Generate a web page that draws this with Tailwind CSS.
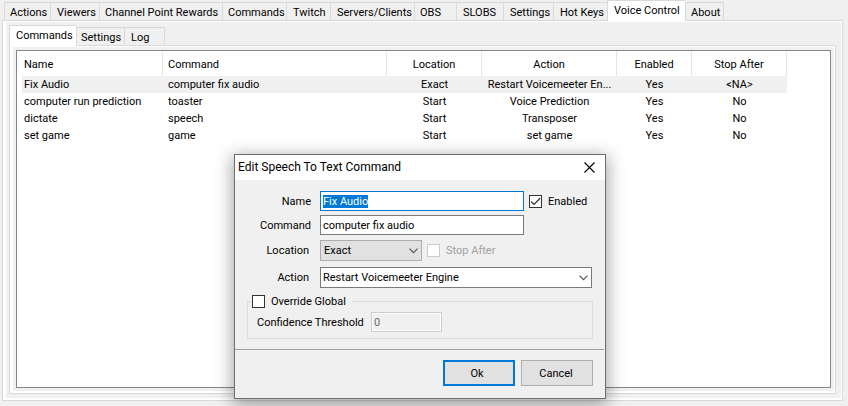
<!DOCTYPE html>
<html lang="en">
<head>
<meta charset="utf-8">
<title>Voice Control</title>
<script src="https://cdn.jsdelivr.net/npm/@tailwindcss/browser@4"></script>
</head>
<body class="flex min-h-screen flex-col overflow-hidden bg-[#f0f0f0] pr-[5px] pb-[5px] pl-[2px] font-[Roboto,'Liberation_Sans',sans-serif] text-[11px] leading-[17px] text-black">

<nav class="ml-[2px] flex h-5 items-end" aria-label="Main">
  <button class="h-[18px] w-[46px] border-t border-l border-[#d9d9d9] pt-px pl-[5px] text-left whitespace-nowrap">Actions</button>
  <button class="h-[18px] w-[49px] border-t border-l border-[#d9d9d9] pt-px pl-[6px] text-left whitespace-nowrap">Viewers</button>
  <button class="h-[18px] w-[123px] border-t border-l border-[#d9d9d9] pt-px pl-[5px] text-left whitespace-nowrap">Channel Point Rewards</button>
  <button class="h-[18px] w-[64px] border-t border-l border-[#d9d9d9] pt-px pl-[5px] text-left whitespace-nowrap">Commands</button>
  <button class="h-[18px] w-[44px] border-t border-l border-[#d9d9d9] pt-px pl-[6px] text-left whitespace-nowrap">Twitch</button>
  <button class="h-[18px] w-[84px] border-t border-l border-[#d9d9d9] pt-px pl-[6px] text-left whitespace-nowrap">Servers/Clients</button>
  <button class="h-[18px] w-[42px] border-t border-l border-[#d9d9d9] pt-px pl-[5px] text-left whitespace-nowrap">OBS</button>
  <button class="h-[18px] w-[47px] border-t border-l border-[#d9d9d9] pt-px pl-[6px] text-left whitespace-nowrap">SLOBS</button>
  <button class="h-[18px] w-[50px] border-t border-l border-[#d9d9d9] pt-px pl-[6px] text-left whitespace-nowrap">Settings</button>
  <button class="h-[18px] w-[54px] border-t border-l border-[#d9d9d9] pt-px pl-[6px] text-left whitespace-nowrap">Hot Keys</button>
  <button class="relative z-10 -mb-px h-[21px] w-[78px] border-t border-l border-[#d9d9d9] bg-white pb-[2px] pl-[6px] text-left whitespace-nowrap">Voice Control</button>
  <button class="h-[18px] w-[39px] border-x border-t border-[#d9d9d9] pt-px pl-[5px] text-left whitespace-nowrap">About</button>
</nav>

<main class="flex grow flex-col border border-[#d9d9d9] bg-white pt-px pr-px pb-[2px] pl-[3px]">
  <div class="flex grow flex-col bg-[#f0f0f0] pr-[5px] pb-[4px] pl-[3px]">
    <nav class="flex h-[23px] items-end" aria-label="Voice control">
      <button class="relative z-10 -mb-px h-[21px] w-[67px] border-t border-l border-[#d9d9d9] bg-white pb-[2px] pl-[6px] text-left whitespace-nowrap">Commands</button>
      <button class="h-[18px] w-[48px] border-t border-l border-[#d9d9d9] pt-px pl-[4px] text-left whitespace-nowrap">Settings</button>
      <button class="h-[18px] w-[41px] border-x border-t border-[#d9d9d9] pt-px pl-[6px] text-left whitespace-nowrap">Log</button>
    </nav>
    <section class="flex grow flex-col border border-[#d9d9d9] bg-white pt-px pr-px pb-[2px] pl-[3px]">
      <div class="flex grow flex-col bg-[#f0f0f0] p-[3px]">
        <div class="grow border border-[#828790] bg-white pl-[5px]">
          <table class="w-[765px] table-fixed border-separate border-spacing-0 text-center">
            <colgroup>
              <col class="w-[141px]"><col class="w-[224px]"><col class="w-[95px]"><col class="w-[135px]"><col class="w-[75px]"><col class="w-[95px]">
            </colgroup>
            <thead>
              <tr class="h-[25px]">
                <th class="border-r border-[#e5e5e5] p-0 pt-px pl-[2px] text-left font-normal">Name</th>
                <th class="border-r border-[#e5e5e5] p-0 pt-px pl-[5px] text-left font-normal">Command</th>
                <th class="border-r border-[#e5e5e5] p-0 pt-px font-normal">Location</th>
                <th class="border-r border-[#e5e5e5] p-0 pt-px font-normal">Action</th>
                <th class="border-r border-[#e5e5e5] p-0 pt-px font-normal">Enabled</th>
                <th class="border-r border-[#e5e5e5] p-0 pt-px font-normal">Stop After</th>
              </tr>
            </thead>
            <tbody class="leading-[16px] whitespace-nowrap">
              <tr class="h-[17px] bg-[#f0f0f0]"><td class="p-0 pt-px pl-[2px] text-left">Fix Audio</td><td class="p-0 pt-px pl-[5px] text-left">computer fix audio</td><td class="p-0 pt-px">Exact</td><td class="p-0 pt-px">Restart Voicemeeter En...</td><td class="p-0 pt-px">Yes</td><td class="p-0 pt-px">&lt;NA&gt;</td></tr>
              <tr class="h-[17px]"><td class="p-0 pt-px pl-[2px] text-left">computer run prediction</td><td class="p-0 pt-px pl-[5px] text-left">toaster</td><td class="p-0 pt-px">Start</td><td class="p-0 pt-px">Voice Prediction</td><td class="p-0 pt-px">Yes</td><td class="p-0 pt-px">No</td></tr>
              <tr class="h-[17px]"><td class="p-0 pt-px pl-[2px] text-left">dictate</td><td class="p-0 pt-px pl-[5px] text-left">speech</td><td class="p-0 pt-px">Start</td><td class="p-0 pt-px">Transposer</td><td class="p-0 pt-px">Yes</td><td class="p-0 pt-px">No</td></tr>
              <tr class="h-[17px]"><td class="p-0 pt-px pl-[2px] text-left">set game</td><td class="p-0 pt-px pl-[5px] text-left">game</td><td class="p-0 pt-px">Start</td><td class="p-0 pt-px">set game</td><td class="p-0 pt-px">Yes</td><td class="p-0 pt-px">No</td></tr>
            </tbody>
          </table>
        </div>
      </div>
    </section>
  </div>
</main>

<div role="dialog" aria-labelledby="dlg-title" class="absolute top-[154px] left-[234px] z-20 w-[372px] border border-[#6e6e6e] bg-[#f0f0f0] shadow-[0_4px_16px_2px_rgba(0,0,0,0.35)]">
  <header class="flex h-[25px] items-center justify-between bg-white pr-[10px] pl-[3px]">
    <h1 id="dlg-title" class="text-[12px]">Edit Speech To Text Command</h1>
    <button aria-label="Close">
      <svg class="block" width="11" height="11" viewBox="0 0 11 11" fill="none" stroke="#000" stroke-width="1.1"><path d="M.5 .5l10 10M10.500 .5l-10 10"/></svg>
    </button>
  </header>
  <form>
    <div class="flex flex-col gap-y-1 pt-[11px] pr-[13px]">
      <div class="flex h-5 items-center">
        <label for="name" class="mr-[9px] w-[76px] text-right">Name</label>
        <input id="name" value="Fix Audio" class="h-5 w-[204px] border border-[#0078d7] bg-white px-[2px] outline-none selection:bg-[#0078d7] selection:text-white">
        <input id="enabled" type="checkbox" checked class="ml-[5px] size-[13px] appearance-none border border-[#333] bg-white">
        <svg class="pointer-events-none -ml-[13px] block" width="13" height="13" viewBox="0 0 13 13" fill="none" stroke="#333" stroke-width="1.3"><path d="M2.200 6.500l2.900 2.900 6-6.200"/></svg>
        <label for="enabled" class="ml-[6px]">Enabled</label>
      </div>
      <div class="flex h-5 items-center">
        <label for="command" class="mr-[9px] w-[76px] text-right">Command</label>
        <input id="command" value="computer fix audio" class="h-5 w-[204px] border border-[#7a7a7a] bg-white px-[2px] outline-none">
      </div>
      <div class="mt-px flex h-[21px] items-center">
        <label for="location" class="mr-[11px] w-[74px] text-right">Location</label>
        <div class="relative">
          <select id="location" class="block h-[21px] w-[102px] appearance-none border border-[#adadad] bg-[#e1e1e1] px-[3px] outline-none"><option>Exact</option></select>
          <svg class="pointer-events-none absolute top-[8px] right-[4px]" width="9" height="6" viewBox="0 0 9 6" fill="none" stroke="#555" stroke-width="1.2"><path d="M.5 .7l4 4 4-4"/></svg>
        </div>
        <input id="stop" type="checkbox" disabled class="ml-[5px] size-[13px] appearance-none border border-[#ccc] bg-white">
        <label for="stop" class="ml-[6px] text-[#a0a0a0]">Stop After</label>
      </div>
      <div class="mt-[2px] flex h-[21px] items-center">
        <label for="action" class="mr-[11px] w-[74px] text-right">Action</label>
        <div class="relative grow">
          <select id="action" class="block h-[21px] w-full appearance-none border border-[#7a7a7a] bg-white px-[2px] outline-none"><option>Restart Voicemeeter Engine</option></select>
          <svg class="pointer-events-none absolute top-[8px] right-[4px]" width="9" height="6" viewBox="0 0 9 6" fill="none" stroke="#555" stroke-width="1.2"><path d="M.5 .7l4 4 4-4"/></svg>
        </div>
      </div>
    </div>
    <fieldset class="mx-[12px] mt-[5px] mb-[10px] border border-[#dcdcdc] pb-[6px] pl-[4px]">
      <legend class="flex h-[17px] w-[100px] items-center whitespace-nowrap">
        <input id="override" type="checkbox" class="mr-[6px] size-[13px] appearance-none border border-[#333] bg-white">
        <label for="override">Override Global</label>
      </legend>
      <div class="mt-[2px] flex h-5 items-center pl-[5px]">
        <label for="threshold" class="w-[114px]">Confidence Threshold</label>
        <input id="threshold" value="0" disabled class="h-5 w-[71px] border border-[#ccc] bg-[#f0f0f0] px-[2px] text-[#6d6d6d] shadow-[inset_0_0_0_1px_#fff]">
      </div>
    </fieldset>
    <footer class="mr-px flex justify-end gap-[6px] border-t border-[#a0a0a0] pt-[10px] pr-[11px] pb-[12px]">
      <button type="button" class="h-[26px] w-[72px] border-2 border-[#0078d7] bg-[#e1e1e1] pr-[4px]">Ok</button>
      <button type="button" class="h-[26px] w-[72px] border border-[#adadad] bg-[#e1e1e1] pr-[2px]">Cancel</button>
    </footer>
  </form>
</div>

<script>
  const nameBox = document.getElementById('name');
  nameBox.focus();
  nameBox.select();
</script>
</body>
</html>
